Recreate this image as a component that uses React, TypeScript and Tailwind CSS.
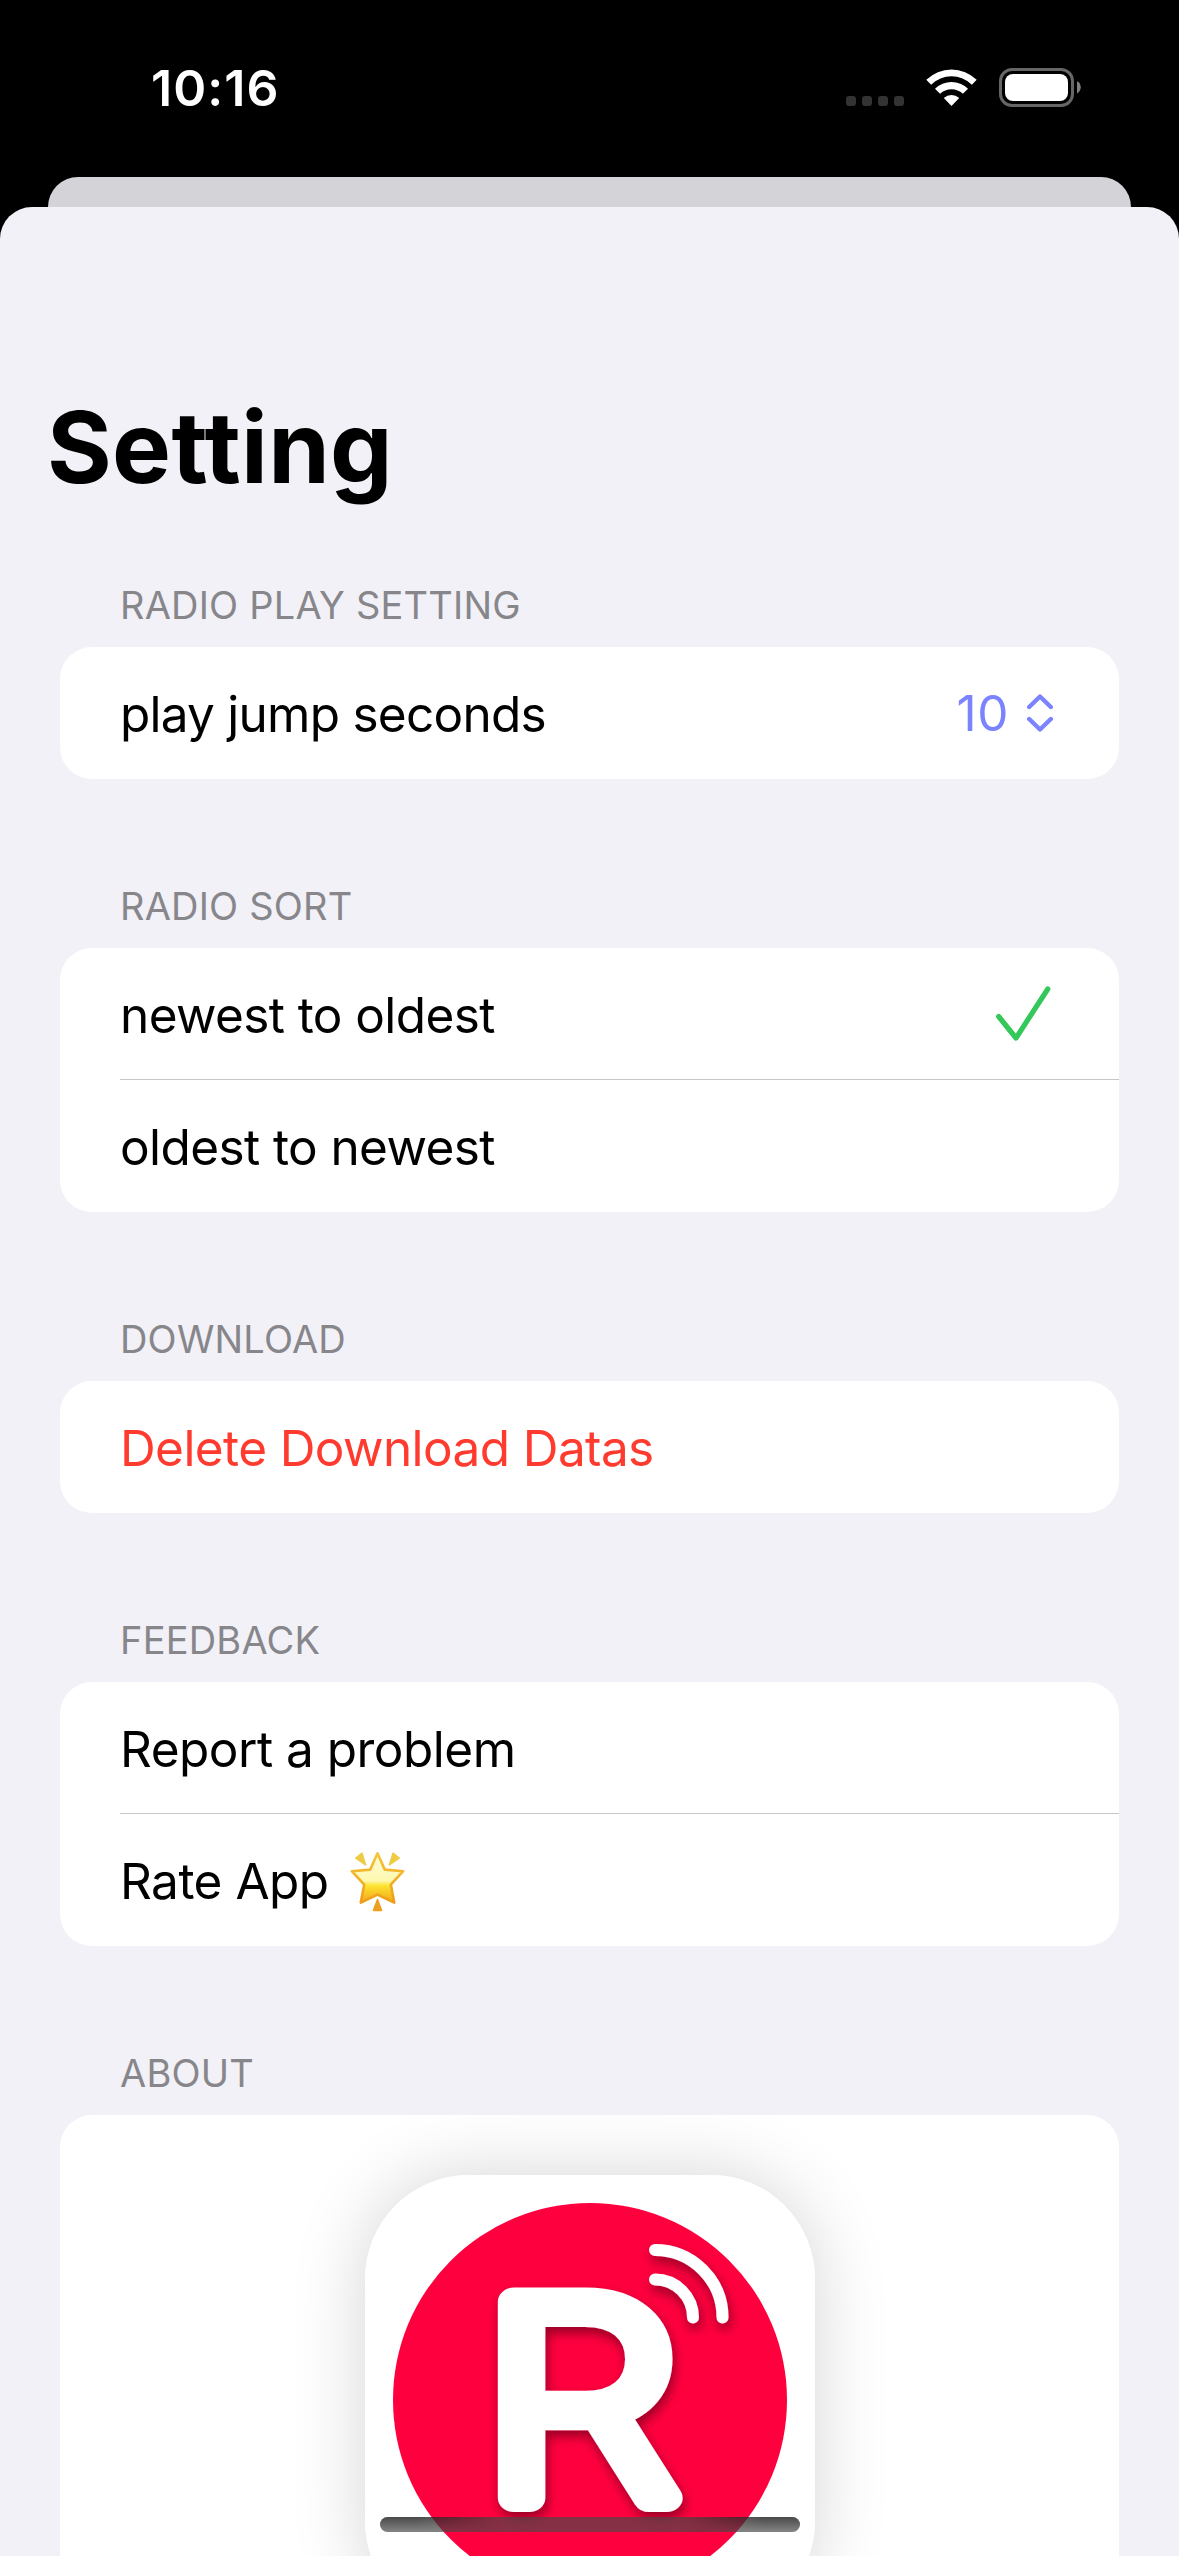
import React from "react";

function StatusBar() {
  return (
    <div className="flex h-[177px] items-start justify-between pl-[151px] pr-[98px]">
      <div className="mt-[58px] text-[50px] leading-[60px] font-semibold tracking-[1.1px] text-white">10:16</div>
      <div className="mt-[68px] flex">
        <div className="mt-[28px] flex gap-[6px]">
          {[0, 1, 2, 3].map((i) => (
            <div key={i} className="size-[10px] rounded-[3px] bg-[#333333]" />
          ))}
        </div>
        <svg className="ml-[22px]" width="51" height="38" viewBox="0 0 51 38">
          <g fill="#fff">
            <path d="M0.3 11.8 A36 36 0 0 1 50.7 11.8 L45.9 16.7 A29 29 0 0 0 5.1 16.7 Z" />
            <path d="M9 20.8 A23.6 23.6 0 0 1 42 20.8 L36.9 25.8 A16.4 16.4 0 0 0 14.1 25.8 Z" />
            <path d="M17.8 29.9 A11.6 11.6 0 0 1 33.2 29.9 L25.5 38 Z" />
          </g>
        </svg>
        <svg className="ml-[22px]" width="82" height="39" viewBox="0 0 82 39">
          <rect x="1.5" y="1.5" width="72" height="36" rx="11.5" fill="none" stroke="#666" strokeWidth="3" />
          <rect x="6" y="6" width="63" height="27" rx="8" fill="#fff" />
          <path d="M78 13.2 C83 15.5 83 23 78 25.4 Z" fill="#808080" />
        </svg>
      </div>
    </div>
  );
}

function Section({ title, children }: { title: string; children: React.ReactNode }) {
  return (
    <section>
      <h2 className="mb-[22px] pl-[60px] text-[38px] leading-[40px] tracking-[0.2px] text-[#87868b]">{title}</h2>
      <div className="overflow-hidden rounded-[32px] bg-white">{children}</div>
    </section>
  );
}

function Row({ children, divider = false }: { children: React.ReactNode; divider?: boolean }) {
  return (
    <div className="pl-[60px]">
      <div className={divider ? "flex h-[132px] items-center justify-between border-b border-[#c6c6c8]" : "flex h-[132px] items-center justify-between"}>
        {children}
      </div>
    </div>
  );
}

function GlowingStar() {
  return (
    <svg width="57" height="61" viewBox="0 0 57 61">
      <defs>
        <linearGradient id="star" x1="0" y1="0" x2="0" y2="1">
          <stop offset="0" stopColor="#fffbd8" />
          <stop offset="0.55" stopColor="#fdf9b0" />
          <stop offset="0.66" stopColor="#fde32f" />
          <stop offset="1" stopColor="#f3a41c" />
        </linearGradient>
        <linearGradient id="starEdge" x1="0" y1="0" x2="0" y2="1">
          <stop offset="0" stopColor="#f4c63c" />
          <stop offset="1" stopColor="#ee9d17" />
        </linearGradient>
      </defs>
      <path d="M28.5 2.4 L35.8 18.600 L54.2 20.2 L41.8 33.6 L45.2 51.6 L28.5 43.6 L11.8 51.6 L15.2 33.6 L2.800 20.2 L21.2 18.600 Z" fill="url(#star)" stroke="url(#starEdge)" strokeWidth="2.6" strokeLinejoin="round" />
      <g fill="#efcb45" stroke="#efcb45" strokeWidth="1.5" strokeLinejoin="round">
        <path d="M13 2.2 L6.8 7.2 L16.6 14 Z" />
        <path d="M44 2.2 L50.2 7.2 L40.4 14 Z" />
      </g>
      <path d="M28.5 48.5 L32.6 59.5 H24.4 Z" fill="#ec9f20" stroke="#ec9f20" strokeWidth="1.5" strokeLinejoin="round" />
    </svg>
  );
}

function AppLogo() {
  return (
    <div className="size-[450px] overflow-hidden rounded-[104px] bg-white">
      <svg width="450" height="450" viewBox="0 0 450 450">
        <defs>
          <filter id="drop" x="-20%" y="-20%" width="150%" height="150%">
            <feDropShadow dx="2" dy="6" stdDeviation="6" floodColor="#000" floodOpacity="0.42" />
          </filter>
        </defs>
        <circle cx="225" cy="225" r="197" fill="#ff003e" />
        <g filter="url(#drop)">
          <g transform="translate(116 323) scale(1.175 1)">
            <text x="0" y="0" fontSize="270" fontWeight="200" fill="#fff" stroke="#fff" strokeWidth="28" strokeLinejoin="round">R</text>
          </g>
        </g>
        <g filter="url(#drop)" fill="none" stroke="#fff" strokeWidth="12" strokeLinecap="round">
          <path d="M290 75 A67.500 67.500 0 0 1 357.500 142.500" />
          <path d="M290 104.500 A38 38 0 0 1 328 142.500" />
        </g>
      </svg>
    </div>
  );
}

function HomeIndicator() {
  return (
    <div className="absolute bottom-[24px] left-[380px] flex h-[15px] w-[420px] justify-between overflow-hidden rounded-full bg-[rgba(72,72,72,0.667)]">
      <div className="w-[120px] bg-[linear-gradient(to_bottom,rgba(0,0,0,0.45),rgba(0,0,0,0))] [mask-image:linear-gradient(to_right,black_30%,transparent)]" />
      <div className="w-[120px] bg-[linear-gradient(to_bottom,rgba(0,0,0,0.45),rgba(0,0,0,0))] [mask-image:linear-gradient(to_left,black_30%,transparent)]" />
    </div>
  );
}

export default function App() {
  return (
    <div className="relative h-[2556px] w-[1179px] overflow-hidden bg-black font-['Inter',sans-serif] text-black">
      <StatusBar />
      <div className="mx-[48px] h-[30px] rounded-t-[30px] bg-[#d4d3d8]" />
      <main className="h-[2349px] overflow-hidden rounded-t-[32px] bg-[#f2f1f7]">
        <h1 className="pt-[180px] pl-[47px] text-[99px] leading-[120px] font-bold tracking-[0.3px]">Setting</h1>
        <div className="mt-[78px] flex flex-col gap-[107px] px-[60px]">
          <Section title="RADIO PLAY SETTING">
            <Row>
              <span className="pt-[2px] text-[49.5px] tracking-[-0.75px]">play jump seconds</span>
              <span className="mr-[66px] flex items-center gap-[18px] text-[49.5px] tracking-[0.6px] text-[#7b83ff]">
                10
                <svg width="26" height="38" viewBox="0 0 26 38" fill="none" stroke="#7b83ff" strokeWidth="4.400" strokeLinecap="round" strokeLinejoin="round">
                  <path d="M2.200 13 L13 2.500 L23.800 13" />
                  <path d="M2.200 25 L13 35.500 L23.800 25" />
                </svg>
              </span>
            </Row>
          </Section>
          <Section title="RADIO SORT">
            <Row divider>
              <span className="pt-[3px] text-[49.5px] tracking-[-0.6px]">newest to oldest</span>
              <svg className="mr-[68px]" width="55" height="55" viewBox="0 0 55 55" fill="none" stroke="#34c759" strokeWidth="5.200" strokeLinecap="round" strokeLinejoin="round">
                <path d="M2.700 30.500 L20 52 L51.800 3" />
              </svg>
            </Row>
            <Row>
              <span className="pt-[2px] text-[49.5px] tracking-[-0.6px]">oldest to newest</span>
            </Row>
          </Section>
          <Section title="DOWNLOAD">
            <Row>
              <span className="pt-[2px] text-[49.5px] tracking-[-0.6px] text-[#ff3b30]">Delete Download Datas</span>
            </Row>
          </Section>
          <Section title="FEEDBACK">
            <Row divider>
              <span className="pt-[3px] text-[49.5px] tracking-[-0.5px]">Report a problem</span>
            </Row>
            <Row>
              <span className="flex items-center gap-[20px] pt-[2px] text-[49.5px] tracking-[-0.5px]">
                Rate App
                <GlowingStar />
              </span>
            </Row>
          </Section>
          <Section title="ABOUT">
            <div className="flex h-[570px] justify-center pt-[60px]">
              <div className="size-[450px] rounded-[104px] shadow-[0_0_72px_rgba(0,0,0,0.17)]">
                <AppLogo />
              </div>
            </div>
          </Section>
        </div>
      </main>
      <HomeIndicator />
    </div>
  );
}
